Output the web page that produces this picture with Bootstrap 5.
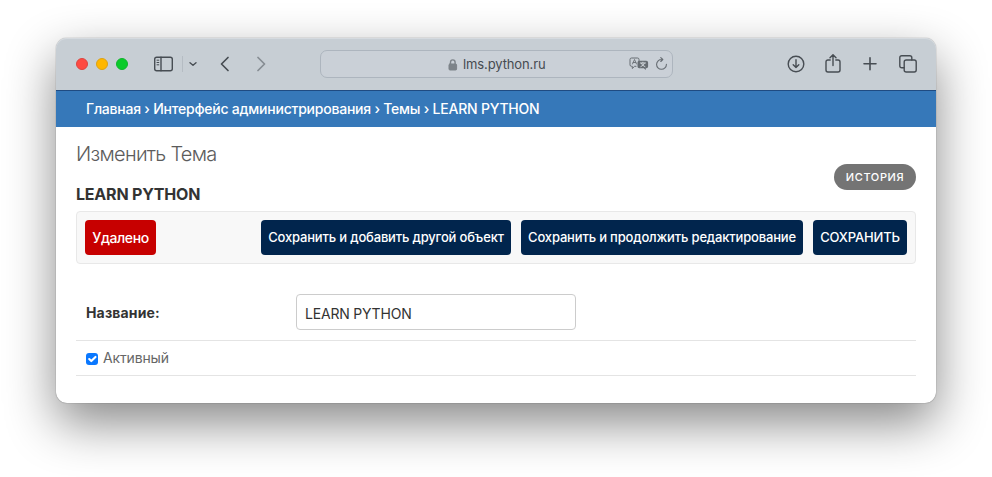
<!DOCTYPE html>
<html lang="ru">
<head>
<meta charset="utf-8">
<meta name="viewport" content="width=device-width, initial-scale=1">
<title>LEARN PYTHON | Изменить Тема</title>
<link href="https://cdn.jsdelivr.net/npm/bootstrap@5.3.0/dist/css/bootstrap.min.css" rel="stylesheet">
<style>
body{font-family:Inter,"Liberation Sans",sans-serif;font-size:14px;background:#fff;color:#333;padding:38px 56px 0;height:477px}
.browser{height:365px;border-radius:11px;box-shadow:0 0 1px rgba(0,0,0,.65),0 20px 50px rgba(0,0,0,.47)}
.toolbar{height:53px;background:#c7ced4;border-bottom:1px solid #1f4b82;border-radius:11px 11px 0 0;padding:0 19px 0 20px;color:#474d53;box-shadow:inset 0 1px #d5dadf}
.toolbar svg{display:block;fill:none;stroke:currentColor;stroke-width:1.4;stroke-linecap:round;stroke-linejoin:round}
.light{width:12px;height:12px;border-radius:50%;margin-right:8px}
.light-red{background:#fe4a42;border:1px solid #dc4540}
.light-yellow{background:#ffb700;border:1px solid #dea212}
.light-green{background:#0acb2a;border:1px solid #10b42d}
.separator{width:1px;height:16px;background:#b5bcc3;margin:0 5px 0 8px}
.back{margin-left:22px}
.next{margin-left:25px}
.address{width:353px;height:28px;margin:-1px 0 0 53px;border:1px solid #adb5be;border-radius:7px;background:#cad0d7;font-size:13px;color:#464b50}
.host{margin-left:127px;gap:5px;letter-spacing:-.12px;padding-top:2px}
.address .reload{margin:0 4px 0 6px}
.actions{gap:22px}
.actions .share{margin-left:-2px}
.crumbs{height:36px;background:#3678b9;color:#fff;padding:0 30px 1px;font-weight:500;font-size:14px;letter-spacing:-.23px}
.content{padding:15px 20px 0}
.heading{height:69px}
.page-title{font-size:20px;font-weight:300;color:#5c5c5c;line-height:24px;letter-spacing:-.7px}
.object-title{font-size:16px;font-weight:700;line-height:20px;letter-spacing:-.2px;margin-top:18px}
.history{width:82px;height:26px;margin-top:22px;background:#747474;color:#fff;font-size:11px;font-weight:500;letter-spacing:.6px}
.submit-row{height:53px;background:#f8f8f8;border:1px solid #e8e8e8;border-radius:4px;padding:0 8px;gap:10px}
.submit-row .btn{height:35px;padding:0;border:0;border-radius:4px;color:#fff;font-size:13px;font-weight:500;white-space:nowrap;letter-spacing:-.17px}
.submit-row .remove{width:71px;background:#c70000;font-size:14px;letter-spacing:-.4px}
.submit-row .navy{background:#01254d}
.add{width:250px}.continue{width:282px}.save{width:94px}
.fields{padding-top:20px}
.field{border-bottom:1px solid #e4e4e4;padding:0 10px}
.field-name{height:57px}
.field-name label{width:210px;font-weight:700;letter-spacing:.15px}
.field-name .form-control{width:280px;height:36px;padding:2px 8px 0;border:1px solid #ccc;border-radius:4px;font-size:14px;color:#333;letter-spacing:-.2px}
.field-active{height:35px;color:#666}
.field-active label{letter-spacing:-.15px;padding-bottom:1px}
.field-active .form-check-input{width:12px;height:12px;margin:2px 5px 0 0;border:0;border-radius:3px;background-color:#0a78ff;background-size:14px}
</style>
</head>
<body>
<main class="browser bg-white">
  <header class="toolbar d-flex align-items-center">
    <div class="d-flex"><span class="light light-red"></span><span class="light light-yellow"></span><span class="light light-green"></span></div>
    <svg class="ms-3" width="22" height="18" viewBox="0 0 22 18"><rect x="2.7" y="2.2" width="17.6" height="13.6" rx="2"/><path d="M9 2.2v13.6"/><path d="M5 5.2h1.8M5 7.5h1.8M5 9.8h1.8" stroke-width="1"/></svg>
    <span class="separator"></span>
    <svg width="10" height="8" viewBox="0 0 10 8"><path d="M2 2.8 5 5.3 8 2.8"/></svg>
    <svg class="back" width="10" height="16" viewBox="0 0 10 16"><path d="M8 1.5 1.5 8 8 14.5" stroke-width="1.7"/></svg>
    <svg class="next" width="12" height="16" viewBox="0 0 12 16" opacity=".5"><path d="M3 1.5 9.5 8 3 14.5" stroke-width="1.7"/></svg>
    <div class="address d-flex align-items-center">
      <div class="host d-flex align-items-center">
        <svg width="10" height="12" viewBox="0 0 10 12" color="#7d8389"><rect x="1" y="5" width="7.6" height="6" rx="1" fill="currentColor" stroke-width="1"/><path d="M2.5 5V3.2a2.3 2.3 0 0 1 4.6 0V5"/></svg>
        <span>lms.python.ru</span>
      </div>
      <svg class="ms-auto" width="20" height="14" viewBox="0 0 20 14" color="#666c72"><path d="M7 9.3H5.6L3.3 11.5V9.3H2.5Q1 9.3 1 7.8V2.5Q1 1 2.5 1h6Q10 1 10 2.5V4" stroke-width="1"/><path d="m3.5 7 2-4.5 2 4.5M4.2 5.5h2.6" stroke-width=".9"/><path d="M10.3 3.8h7q1.8 0 1.8 1.7v4q0 1.7-1.8 1.7h-.5V13l-2-1.8h-4.5q-1.8 0-1.8-1.7v-4q0-1.7 1.8-1.7z" fill="currentColor" stroke="none"/><path d="M11.3 6h5.2M13.9 5.2V6M15.5 6.2q-.5 2.2-3.7 3.5M12.3 6.2q.7 2.4 3.7 3.5" stroke="#d5dadf" stroke-width=".9"/></svg>
      <svg class="reload" width="13" height="14" viewBox="0 0 13 14" color="#666c72"><path d="M6.7 2.5A4.9 4.9 0 1 0 11.4 7.4M5.8.7l2 1.8-2 2" stroke-width="1.1"/></svg>
    </div>
    <div class="actions d-flex align-items-center ms-auto">
      <svg width="18" height="18" viewBox="0 0 18 18"><circle cx="9" cy="9" r="7.8"/><path d="M9 4.8v7.7M6.2 9.8 9 12.6l2.8-2.8"/></svg>
      <svg class="share" width="16" height="20" viewBox="0 0 16 20"><path d="M5.2 6H3Q1 6 1 8v8q0 2 2 2h10q2 0 2-2V8q0-2-2-2h-2.2M8 11.5V.9M5 3.7l3-3 3 3"/></svg>
      <svg width="14" height="14" viewBox="0 0 14 14"><path d="M7 .8v12M1 6.8h12" stroke-width="1.6"/></svg>
      <svg width="18" height="18" viewBox="0 0 18 18"><rect x="5.2" y="5" width="12" height="12" rx="2"/><path d="M5 12.8H2.8q-2 0-2-2v-8q0-2 2-2h8q2 0 2 2V5"/></svg>
    </div>
  </header>
  <nav class="crumbs d-flex align-items-center"><span>Главная › Интерфейс администрирования › Темы › LEARN PYTHON</span></nav>
  <section class="content">
    <div class="heading d-flex justify-content-between align-items-start">
      <div><h1 class="page-title mb-0">Изменить Тема</h1><h2 class="object-title mb-0">LEARN PYTHON</h2></div>
      <a class="history rounded-pill d-flex align-items-center justify-content-center text-decoration-none">ИСТОРИЯ</a>
    </div>
    <div class="submit-row d-flex align-items-center">
      <button class="btn remove me-auto">Удалено</button>
      <button class="btn navy add">Сохранить и добавить другой объект</button>
      <button class="btn navy continue">Сохранить и продолжить редактирование</button>
      <button class="btn navy save">СОХРАНИТЬ</button>
    </div>
    <form class="fields">
      <div class="field field-name d-flex align-items-center"><label for="name">Название:</label><input id="name" class="form-control" value="LEARN PYTHON"></div>
      <div class="field field-active d-flex align-items-center"><input id="active" type="checkbox" class="form-check-input" checked><label for="active">Активный</label></div>
    </form>
  </section>
</main>
<script src="https://cdn.jsdelivr.net/npm/bootstrap@5.3.0/dist/js/bootstrap.bundle.min.js"></script>
</body>
</html>
